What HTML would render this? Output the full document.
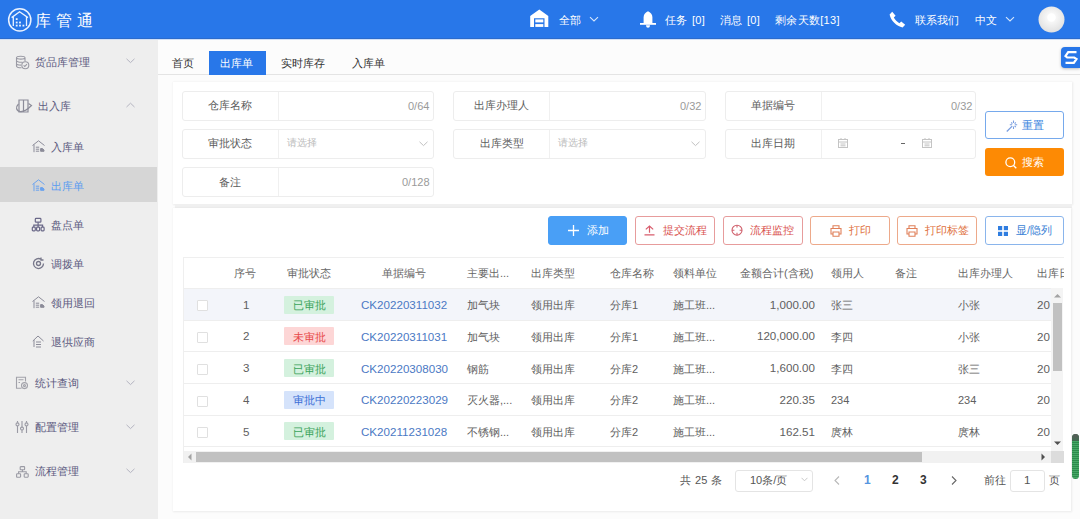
<!DOCTYPE html>
<html><head><meta charset="utf-8">
<style>
*{box-sizing:border-box;margin:0;padding:0}
html,body{width:1080px;height:519px;overflow:hidden}
body{position:relative;font-family:"Liberation Sans",sans-serif;font-size:11px;background:#fcfcfc;color:#333}
.a{position:absolute;white-space:nowrap;line-height:20px}
svg.a{line-height:0}
</style></head><body>
<div style="position:absolute;left:0px;top:0px;width:1080px;height:39px;background:#2877e9;border-bottom:1px solid #2b6bcc"></div>
<div style="position:absolute;left:0px;top:39px;width:1080px;height:1px;background:#cfdff6"></div>
<svg class="a" style="left:7px;top:8px" width="25" height="25" viewBox="0 0 25 25" ><circle cx="12.75" cy="11.9" r="11.1" fill="none" stroke="#eaf2ff" stroke-width="1.5"/><path d="M4.6 9.6 L12.6 3.8 L21 9.6 M6.3 8.6 V18 M19.5 8.6 V18" fill="none" stroke="#eaf2ff" stroke-width="1.3"/><g fill="#eaf2ff"><rect x="8.80" y="10.20" width="1.8" height="1.8"/><rect x="8.80" y="13.60" width="1.8" height="1.8"/><rect x="12.10" y="13.60" width="1.8" height="1.8"/><rect x="8.80" y="16.70" width="1.8" height="1.8"/><rect x="12.10" y="16.70" width="1.8" height="1.8"/><rect x="15.50" y="16.70" width="1.8" height="1.8"/></g></svg>
<div class="a" style="left:35px;top:11.3px;font-size:16px;color:#fff;letter-spacing:4.9px">库管通</div>
<svg class="a" style="left:530px;top:9px" width="19" height="18" viewBox="0 0 19 18" ><path d="M0.2 7 L9.3 0.4 L18.3 7 V17.9 H14.5 V9.2 H4 V17.9 H0.2 Z" fill="#fff"/><rect x="5.3" y="10.4" width="8" height="3" fill="#fff"/><rect x="5.3" y="15.1" width="8" height="2.8" fill="#fff"/></svg>
<div class="a" style="left:559px;top:9.5px;font-size:11px;color:#fff;">全部</div>
<svg class="a" style="left:589px;top:16px" width="10" height="7" viewBox="0 0 10 7" ><path d="M1 1.2 L5 5 L9 1.2" fill="none" stroke="#d6e6fb" stroke-width="1.1"/></svg>
<svg class="a" style="left:640px;top:11px" width="16" height="17" viewBox="0 0 16 17" ><path d="M8 0.3 C5.5 1.5 3.8 3 3.6 6 V12 H12.4 V6 C12.2 3 10.5 1.5 8 0.3 Z" fill="#fff"/><rect x="0" y="12" width="16" height="1.8" fill="#fff"/><path d="M6 14.3 H10 C10 16 9 16.8 8 16.8 C7 16.8 6 16 6 14.3 Z" fill="#fff"/></svg>
<div class="a" style="left:665px;top:9.5px;font-size:11px;color:#fff;word-spacing:1px;letter-spacing:0.3px">任务&nbsp;[0]</div>
<div class="a" style="left:720px;top:9.5px;font-size:11px;color:#fff;word-spacing:1px;letter-spacing:0.3px">消息&nbsp;[0]</div>
<div class="a" style="left:775px;top:9.5px;font-size:11px;color:#fff;letter-spacing:0.3px">剩余天数[13]</div>
<svg class="a" style="left:889px;top:11px" width="17" height="17" viewBox="0 0 17 17" ><path d="M3.2 0.8 L6.6 4.8 L4.8 6.6 C6.2 9 8 10.8 10.4 12.2 L12.2 10.4 L16.2 13.8 L13.6 16.4 C7.5 15.2 1.8 9.5 0.6 3.4 Z" fill="#fff"/></svg>
<div class="a" style="left:915px;top:9.5px;font-size:11px;color:#fff;">联系我们</div>
<div class="a" style="left:975px;top:9.5px;font-size:11px;color:#fff;">中文</div>
<svg class="a" style="left:1005px;top:16px" width="10" height="7" viewBox="0 0 10 7" ><path d="M1 1.2 L5 5 L9 1.2" fill="none" stroke="#d6e6fb" stroke-width="1.1"/></svg>
<svg class="a" style="left:1038px;top:6px" width="27" height="27" viewBox="0 0 27 27" ><defs><radialGradient id="av" cx="0.5" cy="0.42" r="0.55"><stop offset="0" stop-color="#ffffff"/><stop offset="0.35" stop-color="#f6f6f6"/><stop offset="1" stop-color="#e2e2e2"/></radialGradient></defs><circle cx="13.5" cy="13.5" r="13" fill="url(#av)"/><circle cx="13.5" cy="11.5" r="4.2" fill="#fff"/></svg>
<div style="position:absolute;left:0px;top:40px;width:158px;height:479px;background:#eeeeee"></div>
<svg class="a" style="left:15px;top:55px" width="15" height="15" viewBox="0 0 15 15" ><g fill="none" stroke="#9a9aa4" stroke-width="1.1"><path d="M1.5 2.8 C1.5 0.8 10 0.8 10 2.8 C10 4.6 1.5 4.6 1.5 2.8 Z M1.5 2.8 V11 C1.5 12.4 4 12.8 6.5 12.8 M10 2.8 V6.2 M1.5 5.6 C1.5 7.2 5 7.4 7.5 7.2 M1.5 8.4 C1.5 9.8 4 10.1 6 10.1"/><circle cx="10.3" cy="10.3" r="3.5"/><path d="M8.6 10.3 L9.8 11.5 L12 9.2"/></g></svg>
<div class="a" style="left:35px;top:52.3px;font-size:11px;color:#5c5a80;">货品库管理</div>
<svg class="a" style="left:126px;top:58px" width="9" height="6" viewBox="0 0 9 6" ><path d="M0.5 0.8 L4.5 4.6 L8.5 0.8" fill="none" stroke="#b4b4c0" stroke-width="1"/></svg>
<svg class="a" style="left:15px;top:98px" width="18" height="16" viewBox="0 0 18 16" ><g fill="none" stroke="#8c8c99" stroke-width="1.2"><path d="M4 2 H8.5 V14 H4 Z M8.5 2 H13 V14 H8.5 Z"/><path d="M3.5 6 C0.5 9 1 13 5 13.5 C9 14 13 11 16.5 7.5 L13.5 5.5"/></g></svg>
<div class="a" style="left:38px;top:96.4px;font-size:11px;color:#5c5a80;">出入库</div>
<svg class="a" style="left:126px;top:102px" width="9" height="6" viewBox="0 0 9 6" ><path d="M0.5 5 L4.5 1.2 L8.5 5" fill="none" stroke="#b4b4c0" stroke-width="1"/></svg>
<svg class="a" style="left:32px;top:140px" width="13" height="13" viewBox="0 0 13 13" ><g fill="none" stroke="#8c8c99" stroke-width="1"><path d="M0.5 5.5 L6.5 0.8 L12.5 5.5 M2 4.6 V12.2 M3.8 7.2 H7.2 M3.8 9.2 H7.2 M3.8 11.2 H7.2"/><path d="M8.6 8.6 H10.4 L12 10 V11.3 H8.6 Z" fill="#8c8c99"/></g></svg>
<div class="a" style="left:51px;top:137.2px;font-size:11px;color:#5c5a80;">入库单</div>
<div style="position:absolute;left:0px;top:167px;width:157px;height:35px;background:#d6d6d6"></div>
<svg class="a" style="left:32px;top:179px" width="13" height="13" viewBox="0 0 13 13" ><g fill="none" stroke="#6ba3ee" stroke-width="1"><path d="M0.5 5.5 L6.5 0.8 L12.5 5.5 M2 4.6 V12.2 M3.8 7.2 H7.2 M3.8 9.2 H7.2 M3.8 11.2 H7.2"/><path d="M8.6 8.6 H10.4 L12 10 V11.3 H8.6 Z" fill="#6ba3ee"/></g></svg>
<div class="a" style="left:51px;top:175.8px;font-size:11px;color:#5b9cf0;">出库单</div>
<svg class="a" style="left:31px;top:217px" width="15" height="15" viewBox="0 0 15 15" ><g fill="none" stroke="#6a6888" stroke-width="1.2"><rect x="4.3" y="1.4" width="5.6" height="3.8" rx="0.8"/><path d="M7.1 5.2 V8.2 M2.8 10 V8.2 H11.6 V10 M7.1 8.2 V10"/><rect x="1.3" y="10.2" width="3" height="3.6" rx="0.8"/><rect x="5.6" y="10.2" width="3" height="3.6" rx="0.8"/><rect x="10.1" y="10.2" width="3" height="3.6" rx="0.8"/></g></svg>
<div class="a" style="left:51px;top:215.0px;font-size:11px;color:#5c5a80;">盘点单</div>
<svg class="a" style="left:32px;top:257px" width="13" height="13" viewBox="0 0 13 13" ><g fill="none" stroke="#77778a" stroke-width="1.3"><path d="M11.5 6.5 A5 5 0 1 1 9 2.2 M9 0.5 V3 H11.5"/><circle cx="6.5" cy="6.5" r="2"/></g></svg>
<div class="a" style="left:51px;top:253.7px;font-size:11px;color:#5c5a80;">调拨单</div>
<svg class="a" style="left:32px;top:296px" width="13" height="13" viewBox="0 0 13 13" ><g fill="none" stroke="#8c8c99" stroke-width="1"><path d="M0.5 5.5 L6.5 0.8 L12.5 5.5 M2 4.6 V12.2 M3.8 7.2 H7.2 M3.8 9.2 H7.2 M3.8 11.2 H7.2"/><path d="M8.6 8.6 H10.4 L12 10 V11.3 H8.6 Z" fill="#8c8c99"/></g></svg>
<div class="a" style="left:51px;top:292.5px;font-size:11px;color:#5c5a80;">领用退回</div>
<svg class="a" style="left:32px;top:335px" width="13" height="13" viewBox="0 0 13 13" ><path d="M0.8 6 L6 1 L11.5 6 M2 5 V12 M4 7 H9 M4 9.5 H9 M4 12 H9" fill="none" stroke="#8c8c99" stroke-width="1"/></svg>
<div class="a" style="left:51px;top:331.5px;font-size:11px;color:#5c5a80;">退供应商</div>
<svg class="a" style="left:15px;top:376px" width="14" height="14" viewBox="0 0 14 14" ><g fill="none" stroke="#a2a2aa" stroke-width="1.1"><path d="M6.5 12.3 H1.5 V1.2 H10.5 V5.5 M3.5 3.8 H8.5 M3.5 6.5 H5"/><circle cx="9.5" cy="9.6" r="3"/><circle cx="9.5" cy="9.6" r="1"/></g></svg>
<div class="a" style="left:35px;top:373.2px;font-size:11px;color:#5c5a80;">统计查询</div>
<svg class="a" style="left:126px;top:380px" width="9" height="6" viewBox="0 0 9 6" ><path d="M0.5 0.8 L4.5 4.6 L8.5 0.8" fill="none" stroke="#b4b4c0" stroke-width="1"/></svg>
<svg class="a" style="left:15px;top:420px" width="14" height="14" viewBox="0 0 14 14" ><g fill="none" stroke="#9a9aa4" stroke-width="1.1"><path d="M2.5 1 V2.8 M2.5 6 V13 M7 1 V7 M7 10.2 V13 M11.5 1 V2.8 M11.5 6 V13"/><circle cx="2.5" cy="4.4" r="1.5"/><circle cx="7" cy="8.6" r="1.5"/><circle cx="11.5" cy="4.4" r="1.5"/></g></svg>
<div class="a" style="left:35px;top:416.8px;font-size:11px;color:#5c5a80;">配置管理</div>
<svg class="a" style="left:126px;top:424px" width="9" height="6" viewBox="0 0 9 6" ><path d="M0.5 0.8 L4.5 4.6 L8.5 0.8" fill="none" stroke="#b4b4c0" stroke-width="1"/></svg>
<svg class="a" style="left:16px;top:466px" width="13" height="12" viewBox="0 0 13 12" ><g fill="none" stroke="#9a9aa4" stroke-width="1.1"><rect x="4.2" y="0.6" width="4.4" height="3.2" rx="0.6"/><path d="M6.4 3.8 V5.8 M2.6 7.8 V5.8 H10.2 V7.8"/><rect x="0.6" y="7.8" width="4" height="3.4" rx="0.6"/><rect x="8.2" y="7.8" width="4" height="3.4" rx="0.6"/></g></svg>
<div class="a" style="left:35px;top:461.4px;font-size:11px;color:#5c5a80;">流程管理</div>
<svg class="a" style="left:126px;top:468px" width="9" height="6" viewBox="0 0 9 6" ><path d="M0.5 0.8 L4.5 4.6 L8.5 0.8" fill="none" stroke="#b4b4c0" stroke-width="1"/></svg>
<div style="position:absolute;left:158px;top:40px;width:922px;height:35px;background:#fcfcfc;border-bottom:1px solid #e4e4e4"></div>
<div class="a" style="left:172px;top:52.7px;font-size:11px;color:#333;">首页</div>
<div style="position:absolute;left:209px;top:51px;width:57px;height:24px;background:#2877e9"></div>
<div class="a" style="left:220px;top:52.7px;font-size:11px;color:#fff;">出库单</div>
<div class="a" style="left:281px;top:52.7px;font-size:11px;color:#333;">实时库存</div>
<div class="a" style="left:352px;top:52.7px;font-size:11px;color:#333;">入库单</div>
<div style="position:absolute;left:1061px;top:47px;width:19px;height:21px;background:#2877e9;border-radius:4px 0 0 4px;box-shadow:0 1px 3px rgba(0,0,0,.25)"></div>
<svg class="a" style="left:1063px;top:50px" width="16" height="15" viewBox="0 0 16 15" ><path d="M13.5 2.2 H5.2 L2.5 6 L4.2 7.5 H11.2 L13.5 9 L10.8 12.8 H2.5" fill="none" stroke="#fff" stroke-width="2.2" stroke-linejoin="miter"/></svg>
<div style="position:absolute;left:173px;top:82px;width:899px;height:122px;background:#fff;box-shadow:0 0 2px 0.5px rgba(0,0,0,0.07)"></div>
<div style="position:absolute;left:175px;top:204px;width:897px;height:4px;background:#f0f0f0"></div>
<div style="position:absolute;left:182px;top:91px;width:252px;height:30px;background:#fff;border:1px solid #ededed;border-radius:3px"></div>
<div style="position:absolute;left:278px;top:92px;width:1px;height:28px;background:#f0f0f0"></div>
<div class="a" style="left:208px;top:95.4px;font-size:11px;color:#5c5c5c;">仓库名称</div>
<div class="a" style="left:408px;top:96.1px;font-size:11px;color:#9a9a9a;">0/64</div>
<div style="position:absolute;left:182px;top:129px;width:252px;height:30px;background:#fff;border:1px solid #ededed;border-radius:3px"></div>
<div style="position:absolute;left:278px;top:130px;width:1px;height:28px;background:#f0f0f0"></div>
<div class="a" style="left:208px;top:133.0px;font-size:11px;color:#5c5c5c;">审批状态</div>
<div class="a" style="left:287px;top:132.7px;font-size:10px;color:#bbb;">请选择</div>
<svg class="a" style="left:419px;top:141px" width="9" height="6" viewBox="0 0 9 6" ><path d="M0.5 0.8 L4.5 4.6 L8.5 0.8" fill="none" stroke="#c0c0c0" stroke-width="1"/></svg>
<div style="position:absolute;left:182px;top:167px;width:252px;height:30px;background:#fff;border:1px solid #ededed;border-radius:3px"></div>
<div style="position:absolute;left:278px;top:168px;width:1px;height:28px;background:#f0f0f0"></div>
<div class="a" style="left:219px;top:171.7px;font-size:11px;color:#5c5c5c;">备注</div>
<div class="a" style="left:402px;top:171.7px;font-size:11px;color:#9a9a9a;">0/128</div>
<div style="position:absolute;left:453px;top:91px;width:253px;height:30px;background:#fff;border:1px solid #ededed;border-radius:3px"></div>
<div style="position:absolute;left:549px;top:92px;width:1px;height:28px;background:#f0f0f0"></div>
<div class="a" style="left:474px;top:95.4px;font-size:11px;color:#5c5c5c;">出库办理人</div>
<div class="a" style="left:680px;top:96.1px;font-size:11px;color:#9a9a9a;">0/32</div>
<div style="position:absolute;left:453px;top:129px;width:253px;height:30px;background:#fff;border:1px solid #ededed;border-radius:3px"></div>
<div style="position:absolute;left:549px;top:130px;width:1px;height:28px;background:#f0f0f0"></div>
<div class="a" style="left:480px;top:133.0px;font-size:11px;color:#5c5c5c;">出库类型</div>
<div class="a" style="left:558px;top:132.7px;font-size:10px;color:#bbb;">请选择</div>
<svg class="a" style="left:691px;top:141px" width="9" height="6" viewBox="0 0 9 6" ><path d="M0.5 0.8 L4.5 4.6 L8.5 0.8" fill="none" stroke="#c0c0c0" stroke-width="1"/></svg>
<div style="position:absolute;left:725px;top:91px;width:251px;height:30px;background:#fff;border:1px solid #ededed;border-radius:3px"></div>
<div style="position:absolute;left:821px;top:92px;width:1px;height:28px;background:#f0f0f0"></div>
<div class="a" style="left:751px;top:95.4px;font-size:11px;color:#5c5c5c;">单据编号</div>
<div class="a" style="left:951px;top:96.1px;font-size:11px;color:#9a9a9a;">0/32</div>
<div style="position:absolute;left:725px;top:129px;width:251px;height:30px;background:#fff;border:1px solid #ededed;border-radius:3px"></div>
<div style="position:absolute;left:821px;top:130px;width:1px;height:28px;background:#f0f0f0"></div>
<div class="a" style="left:751px;top:133.0px;font-size:11px;color:#5c5c5c;">出库日期</div>
<svg class="a" style="left:838px;top:138px" width="10" height="10" viewBox="0 0 10 10" ><g fill="none" stroke="#c4c4c4" stroke-width="1"><rect x="0.5" y="1.5" width="9" height="8"/><path d="M0.5 4 H9.5 M3 0 V2 M7 0 V2 M2.5 6 H7.5 M2.5 7.8 H7.5"/></g></svg>
<svg class="a" style="left:922px;top:138px" width="10" height="10" viewBox="0 0 10 10" ><g fill="none" stroke="#c4c4c4" stroke-width="1"><rect x="0.5" y="1.5" width="9" height="8"/><path d="M0.5 4 H9.5 M3 0 V2 M7 0 V2 M2.5 6 H7.5 M2.5 7.8 H7.5"/></g></svg>
<div style="position:absolute;left:901px;top:143px;width:4px;height:1px;background:#666"></div>
<div style="position:absolute;left:985px;top:111px;width:79px;height:28px;background:#fff;border:1px solid #76a9ec;border-radius:3px"></div>
<svg class="a" style="left:1006px;top:120px" width="12" height="12" viewBox="0 0 12 12" ><g stroke="#7a9ee0" stroke-width="1.1" fill="none"><path d="M7.5 0.5 V3 M7.5 6.5 V9 M3.8 4.8 H6.2 M8.8 4.8 H11.2 M5.2 2.5 L6.4 3.7 M8.6 5.9 L9.8 7.1 M9.8 2.5 L8.6 3.7"/><path d="M6.2 6.1 L0.8 11.5" stroke-width="1.3"/></g></svg>
<div class="a" style="left:1022px;top:114.7px;font-size:11px;color:#3a84de;">重置</div>
<div style="position:absolute;left:985px;top:148px;width:79px;height:28px;background:#fd8a04;border-radius:3px"></div>
<svg class="a" style="left:1005px;top:157px" width="12" height="12" viewBox="0 0 12 12" ><g fill="none" stroke="#fff" stroke-width="1.3"><circle cx="5.3" cy="5.3" r="4.4"/><path d="M8.5 8.5 L11.3 11.3"/></g></svg>
<div class="a" style="left:1022px;top:151.9px;font-size:11px;color:#fff;">搜索</div>
<div style="position:absolute;left:173px;top:208px;width:898px;height:303px;background:#fff;box-shadow:0 0 2px 0.5px rgba(0,0,0,0.07)"></div>
<div style="position:absolute;left:548px;top:216px;width:79px;height:29px;background:#499ff6;border:1px solid #499ff6;border-radius:3px"></div>
<svg class="a" style="left:568px;top:225px" width="11" height="11" viewBox="0 0 11 11" ><path d="M5.5 0 V11 M0 5.5 H11" stroke="#fff" stroke-width="1.3"/></svg>
<div class="a" style="left:587px;top:220.0px;font-size:11px;color:#fff;">添加</div>
<div style="position:absolute;left:635px;top:216px;width:80px;height:29px;background:#fff;border:1px solid #e79c9c;border-radius:3px"></div>
<svg class="a" style="left:644px;top:225px" width="11" height="11" viewBox="0 0 11 11" ><path d="M1.8 4.4 L5.5 1 L9.2 4.4 M5.5 1 V7.8 M0.5 9.8 H10.5" fill="none" stroke="#d85c6c" stroke-width="1.2"/></svg>
<div class="a" style="left:663px;top:220.0px;font-size:11px;color:#d9534f;">提交流程</div>
<div style="position:absolute;left:723px;top:216px;width:80px;height:29px;background:#fff;border:1px solid #e79c9c;border-radius:3px"></div>
<svg class="a" style="left:731px;top:224px" width="12" height="12" viewBox="0 0 12 12" ><g fill="none" stroke="#d0606c" stroke-width="1.1"><circle cx="6" cy="6.2" r="5"/><path d="M6 1.2 V3.6 M6 8.8 V11.2 M1 6.2 H3.4 M8.6 6.2 H11"/></g></svg>
<div class="a" style="left:750px;top:220.0px;font-size:11px;color:#d9534f;">流程监控</div>
<div style="position:absolute;left:810px;top:216px;width:80px;height:29px;background:#fff;border:1px solid #eda98a;border-radius:3px"></div>
<svg class="a" style="left:830px;top:225px" width="12" height="12" viewBox="0 0 12 12" ><path d="M3 3.5 V0.8 H9 V3.5 M3 9 H1 V3.5 H11 V9 H9 M3 7 H9 V11.2 H3 Z" fill="none" stroke="#e0805a" stroke-width="1.1"/></svg>
<div class="a" style="left:849px;top:220.0px;font-size:11px;color:#e0703c;">打印</div>
<div style="position:absolute;left:897px;top:216px;width:80px;height:29px;background:#fff;border:1px solid #eda98a;border-radius:3px"></div>
<svg class="a" style="left:906px;top:225px" width="12" height="12" viewBox="0 0 12 12" ><path d="M3 3.5 V0.8 H9 V3.5 M3 9 H1 V3.5 H11 V9 H9 M3 7 H9 V11.2 H3 Z" fill="none" stroke="#e0805a" stroke-width="1.1"/></svg>
<div class="a" style="left:925px;top:220.0px;font-size:11px;color:#e0703c;">打印标签</div>
<div style="position:absolute;left:985px;top:216px;width:79px;height:29px;background:#fff;border:1px solid #8ab5ec;border-radius:3px"></div>
<svg class="a" style="left:998px;top:226px" width="10" height="10" viewBox="0 0 10 10" ><g fill="#2f7de0"><rect x="0" y="0" width="4.2" height="4.2"/><rect x="5.8" y="0" width="4.2" height="4.2"/><rect x="0" y="5.8" width="4.2" height="4.2"/><rect x="5.8" y="5.8" width="4.2" height="4.2"/></g></svg>
<div class="a" style="left:1016px;top:220.0px;font-size:11px;color:#3a7fd5;">显/隐列</div>
<div style="position:absolute;left:183px;top:257px;width:881px;height:206px;overflow:hidden;background:#fff;border-top:1px solid #efefef;border-left:1px solid #efefef">
<div style="position:absolute;left:0px;top:30px;width:868px;height:32px;background:#f3f5fa"></div>
<div class="a" style="left:50px;top:5.1px;font-size:11px;color:#666;">序号</div>
<div class="a" style="left:103px;top:5.1px;font-size:11px;color:#666;">审批状态</div>
<div class="a" style="left:198px;top:5.1px;font-size:11px;color:#666;">单据编号</div>
<div class="a" style="left:283px;top:5.1px;font-size:11px;color:#666;">主要出...</div>
<div class="a" style="left:347px;top:5.1px;font-size:11px;color:#666;">出库类型</div>
<div class="a" style="left:426px;top:5.1px;font-size:11px;color:#666;">仓库名称</div>
<div class="a" style="left:489px;top:5.1px;font-size:11px;color:#666;">领料单位</div>
<div class="a" style="left:556px;top:5.1px;font-size:11px;color:#666;">金额合计(含税)</div>
<div class="a" style="left:647px;top:5.1px;font-size:11px;color:#666;">领用人</div>
<div class="a" style="left:711px;top:5.1px;font-size:11px;color:#666;">备注</div>
<div class="a" style="left:774px;top:5.1px;font-size:11px;color:#666;">出库办理人</div>
<div class="a" style="left:853px;top:5.1px;font-size:11px;color:#666;">出库日期</div>
<div style="position:absolute;left:13px;top:42px;width:11px;height:11px;border:1px solid #e0e0e0;border-radius:1px;background:#fff"></div>
<div class="a" style="left:59px;top:36.7px;font-size:11.6px;color:#606060;">1</div>
<div style="position:absolute;left:100px;top:38px;width:50px;height:18px;background:#d4f1de;border-radius:1px"></div>
<div class="a" style="left:109px;top:37.2px;font-size:11px;color:#3aa35a;">已审批</div>
<div class="a" style="left:177px;top:37.2px;font-size:11.6px;color:#4b79c4;">CK20220311032</div>
<div class="a" style="left:283px;top:37.2px;font-size:11px;color:#606060;">加气块</div>
<div class="a" style="left:347px;top:37.2px;font-size:11px;color:#606060;">领用出库</div>
<div class="a" style="left:426px;top:37.2px;font-size:11px;color:#606060;">分库1</div>
<div class="a" style="left:489px;top:37.2px;font-size:11px;color:#606060;">施工班...</div>
<div class="a" style="right:249px;top:36.69999999999999px;font-size:11.6px;color:#606060">1,000.00</div>
<div class="a" style="left:647px;top:37.2px;font-size:11px;color:#606060;">张三</div>
<div class="a" style="left:774px;top:37.2px;font-size:11px;color:#606060;">小张</div>
<div class="a" style="left:853px;top:37.2px;font-size:11.6px;color:#606060;">20</div>
<div style="position:absolute;left:13px;top:74px;width:11px;height:11px;border:1px solid #e0e0e0;border-radius:1px;background:#fff"></div>
<div class="a" style="left:59px;top:68.4px;font-size:11.6px;color:#606060;">2</div>
<div style="position:absolute;left:100px;top:69px;width:50px;height:18px;background:#fdd6d6;border-radius:1px"></div>
<div class="a" style="left:109px;top:68.9px;font-size:11px;color:#e84848;">未审批</div>
<div class="a" style="left:177px;top:68.9px;font-size:11.6px;color:#4b79c4;">CK20220311031</div>
<div class="a" style="left:283px;top:68.9px;font-size:11px;color:#606060;">加气块</div>
<div class="a" style="left:347px;top:68.9px;font-size:11px;color:#606060;">领用出库</div>
<div class="a" style="left:426px;top:68.9px;font-size:11px;color:#606060;">分库1</div>
<div class="a" style="left:489px;top:68.9px;font-size:11px;color:#606060;">施工班...</div>
<div class="a" style="right:249px;top:68.39999999999998px;font-size:11.6px;color:#606060">120,000.00</div>
<div class="a" style="left:647px;top:68.9px;font-size:11px;color:#606060;">李四</div>
<div class="a" style="left:774px;top:68.9px;font-size:11px;color:#606060;">小张</div>
<div class="a" style="left:853px;top:68.9px;font-size:11.6px;color:#606060;">20</div>
<div style="position:absolute;left:13px;top:106px;width:11px;height:11px;border:1px solid #e0e0e0;border-radius:1px;background:#fff"></div>
<div class="a" style="left:59px;top:100.1px;font-size:11.6px;color:#606060;">3</div>
<div style="position:absolute;left:100px;top:101px;width:50px;height:18px;background:#d4f1de;border-radius:1px"></div>
<div class="a" style="left:109px;top:100.6px;font-size:11px;color:#3aa35a;">已审批</div>
<div class="a" style="left:177px;top:100.6px;font-size:11.6px;color:#4b79c4;">CK20220308030</div>
<div class="a" style="left:283px;top:100.6px;font-size:11px;color:#606060;">钢筋</div>
<div class="a" style="left:347px;top:100.6px;font-size:11px;color:#606060;">领用出库</div>
<div class="a" style="left:426px;top:100.6px;font-size:11px;color:#606060;">分库2</div>
<div class="a" style="left:489px;top:100.6px;font-size:11px;color:#606060;">施工班...</div>
<div class="a" style="right:249px;top:100.09999999999997px;font-size:11.6px;color:#606060">1,600.00</div>
<div class="a" style="left:647px;top:100.6px;font-size:11px;color:#606060;">李四</div>
<div class="a" style="left:774px;top:100.6px;font-size:11px;color:#606060;">张三</div>
<div class="a" style="left:853px;top:100.6px;font-size:11.6px;color:#606060;">20</div>
<div style="position:absolute;left:13px;top:138px;width:11px;height:11px;border:1px solid #e0e0e0;border-radius:1px;background:#fff"></div>
<div class="a" style="left:59px;top:131.8px;font-size:11.6px;color:#606060;">4</div>
<div style="position:absolute;left:100px;top:133px;width:50px;height:18px;background:#d5e3fb;border-radius:1px"></div>
<div class="a" style="left:109px;top:132.3px;font-size:11px;color:#3a6ed6;">审批中</div>
<div class="a" style="left:177px;top:132.3px;font-size:11.6px;color:#4b79c4;">CK20220223029</div>
<div class="a" style="left:283px;top:132.3px;font-size:11px;color:#606060;">灭火器,...</div>
<div class="a" style="left:347px;top:132.3px;font-size:11px;color:#606060;">领用出库</div>
<div class="a" style="left:426px;top:132.3px;font-size:11px;color:#606060;">分库2</div>
<div class="a" style="left:489px;top:132.3px;font-size:11px;color:#606060;">施工班...</div>
<div class="a" style="right:249px;top:131.8px;font-size:11.6px;color:#606060">220.35</div>
<div class="a" style="left:647px;top:132.3px;font-size:11px;color:#606060;">234</div>
<div class="a" style="left:774px;top:132.3px;font-size:11px;color:#606060;">234</div>
<div class="a" style="left:853px;top:132.3px;font-size:11.6px;color:#606060;">20</div>
<div style="position:absolute;left:13px;top:169px;width:11px;height:11px;border:1px solid #e0e0e0;border-radius:1px;background:#fff"></div>
<div class="a" style="left:59px;top:163.5px;font-size:11.6px;color:#606060;">5</div>
<div style="position:absolute;left:100px;top:164px;width:50px;height:18px;background:#d4f1de;border-radius:1px"></div>
<div class="a" style="left:109px;top:164.0px;font-size:11px;color:#3aa35a;">已审批</div>
<div class="a" style="left:177px;top:164.0px;font-size:11.6px;color:#4b79c4;">CK20211231028</div>
<div class="a" style="left:283px;top:164.0px;font-size:11px;color:#606060;">不锈钢...</div>
<div class="a" style="left:347px;top:164.0px;font-size:11px;color:#606060;">领用出库</div>
<div class="a" style="left:426px;top:164.0px;font-size:11px;color:#606060;">分库2</div>
<div class="a" style="left:489px;top:164.0px;font-size:11px;color:#606060;">施工班...</div>
<div class="a" style="right:249px;top:163.5px;font-size:11.6px;color:#606060">162.51</div>
<div class="a" style="left:647px;top:164.0px;font-size:11px;color:#606060;">庹林</div>
<div class="a" style="left:774px;top:164.0px;font-size:11px;color:#606060;">庹林</div>
<div class="a" style="left:853px;top:164.0px;font-size:11.6px;color:#606060;">20</div>
<div style="position:absolute;left:0px;top:30px;width:868px;height:1px;background:#eeeeee"></div>
<div style="position:absolute;left:0px;top:62px;width:868px;height:1px;background:#eeeeee"></div>
<div style="position:absolute;left:0px;top:93px;width:868px;height:1px;background:#eeeeee"></div>
<div style="position:absolute;left:0px;top:125px;width:868px;height:1px;background:#eeeeee"></div>
<div style="position:absolute;left:0px;top:157px;width:868px;height:1px;background:#eeeeee"></div>
<div style="position:absolute;left:0px;top:188px;width:868px;height:1px;background:#eeeeee"></div>
<div style="position:absolute;left:867px;top:30px;width:12px;height:163px;background:#f4f4f4"></div>
<div style="position:absolute;left:869px;top:45px;width:9px;height:68px;background:#c1c1c1"></div>
<svg class="a" style="left:869px;top:35px" width="9" height="5" viewBox="0 0 9 5"><path d="M1 4.5 L4.5 1 L8 4.5 Z" fill="#a3a3a3"/></svg>
<svg class="a" style="left:869px;top:183px" width="9" height="5" viewBox="0 0 9 5"><path d="M1 0.5 L4.5 4 L8 0.5 Z" fill="#505050"/></svg>
<div style="position:absolute;left:0px;top:193px;width:867px;height:12px;background:#f1f1f1"></div>
<div style="position:absolute;left:12px;top:194px;width:726px;height:10px;background:#c1c1c1"></div>
<svg class="a" style="left:3px;top:195px" width="5" height="8" viewBox="0 0 5 8"><path d="M4.5 0.5 L1 4 L4.5 7.5 Z" fill="#a3a3a3"/></svg>
<svg class="a" style="left:857px;top:195px" width="5" height="8" viewBox="0 0 5 8"><path d="M0.5 0.5 L4 4 L0.5 7.5 Z" fill="#505050"/></svg>
<div style="position:absolute;left:867px;top:193px;width:13px;height:12px;background:#dcdcdc"></div>
</div>
<div class="a" style="left:680px;top:469.7px;font-size:11px;color:#555;word-spacing:1px">共 25 条</div>
<div style="position:absolute;left:735px;top:470px;width:78px;height:22px;background:#fff;border:1px solid #e4e4e4;border-radius:3px"></div>
<div class="a" style="left:750px;top:469.7px;font-size:11px;color:#555;">10条/页</div>
<svg class="a" style="left:801px;top:477px" width="7" height="5" viewBox="0 0 7 5" ><path d="M0.5 0.8 L3.5 3.8 L6.5 0.8" fill="none" stroke="#c8c8c8" stroke-width="1"/></svg>
<svg class="a" style="left:834px;top:476px" width="6" height="9" viewBox="0 0 6 9" ><path d="M5 0.5 L1 4.5 L5 8.5" fill="none" stroke="#b8b8b8" stroke-width="1.1"/></svg>
<div class="a" style="left:864px;top:469.7px;font-size:12px;color:#5595e0;font-weight:bold">1</div>
<div class="a" style="left:892px;top:469.7px;font-size:12px;color:#333;font-weight:bold">2</div>
<div class="a" style="left:920px;top:469.7px;font-size:12px;color:#333;font-weight:bold">3</div>
<svg class="a" style="left:951px;top:476px" width="6" height="9" viewBox="0 0 6 9" ><path d="M1 0.5 L5 4.5 L1 8.5" fill="none" stroke="#666" stroke-width="1.1"/></svg>
<div class="a" style="left:984px;top:469.7px;font-size:11px;color:#555;">前往</div>
<div style="position:absolute;left:1010px;top:470px;width:35px;height:22px;background:#fff;border:1px solid #e4e4e4;border-radius:3px"></div>
<div class="a" style="left:1024px;top:469.7px;font-size:11.6px;color:#555;">1</div>
<div class="a" style="left:1049px;top:469.7px;font-size:11px;color:#555;">页</div>
<div style="position:absolute;left:1072px;top:434px;width:7px;height:45px;border-radius:4px;background:repeating-linear-gradient(#2d8a4c 0 1px,#46a866 1px 2px)"></div>
<div style="position:absolute;left:1072px;top:434px;width:7px;height:7px;border-radius:4px 4px 0 0;background:linear-gradient(#5a5a5a,#3e6a4e)"></div>
</body></html>
